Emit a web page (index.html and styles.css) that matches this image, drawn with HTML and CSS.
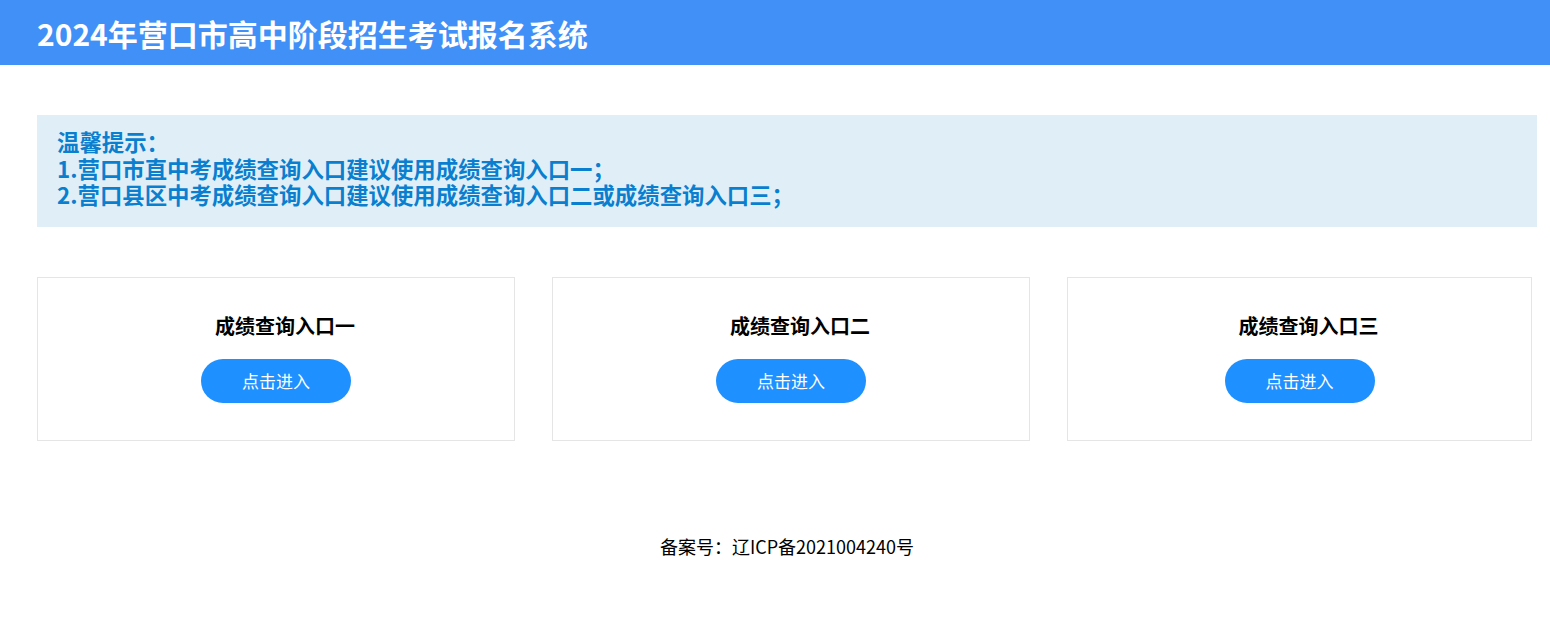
FILE: index.html
```html
<!DOCTYPE html>
<html lang="zh-CN">
<head>
    <meta charset="UTF-8">
    <title>2024年营口市高中阶段招生考试报名系统</title>
    <link rel="stylesheet" href="styles.css">
</head>
<body>
<div class="header">
    <h1>2024年营口市高中阶段招生考试报名系统</h1>
</div>

<div class="wrap">
    <div class="tips">
        <p>温馨提示：</p>
        <p>1.营口市直中考成绩查询入口建议使用成绩查询入口一；</p>
        <p>2.营口县区中考成绩查询入口建议使用成绩查询入口二或成绩查询入口三；</p>
    </div>

    <div class="entries">
        <div class="entry">
            <h3>成绩查询入口一</h3>
            <a class="btn" href="#">点击进入</a>
        </div>
        <div class="entry">
            <h3>成绩查询入口二</h3>
            <a class="btn" href="#">点击进入</a>
        </div>
        <div class="entry">
            <h3>成绩查询入口三</h3>
            <a class="btn" href="#">点击进入</a>
        </div>
    </div>

    <div class="footer">备案号：辽ICP备2021004240号</div>
</div>
</body>
</html>
```

FILE: styles.css
```css
*{box-sizing:border-box;}
body{margin:0;font-family:"Noto Sans CJK SC","Noto Sans",sans-serif;color:#000;background:#fff;}
.header{background:#4090f8;height:65px;padding:0 37px;display:flex;align-items:center;}
.header h1{margin:0;color:#fff;font-size:30px;font-weight:700;line-height:1;}
.wrap{width:1500px;margin:0 0 0 37px;}
.tips{margin-top:50px;background:#e0eff7;padding:13px 20px 19px;color:#0a7fcf;}
.tips p{margin:0;font-size:22.4px;font-weight:700;line-height:26.5px;}
.entries{display:grid;grid-template-columns:478px 478px 465px;column-gap:37px;margin-top:50px;}
.entry{border:1px solid #e5e5e5;height:164px;display:flex;flex-direction:column;align-items:center;padding-top:35px;}
.entry h3{margin:0 0 20px;padding-left:18px;font-size:20px;font-weight:700;line-height:26px;}
.btn{display:block;width:150px;height:44px;line-height:44px;border-radius:22px;background:#1e90ff;color:#fff;text-align:center;text-decoration:none;font-size:17px;}
.footer{margin-top:94px;text-align:center;font-size:18px;line-height:22px;}
```
